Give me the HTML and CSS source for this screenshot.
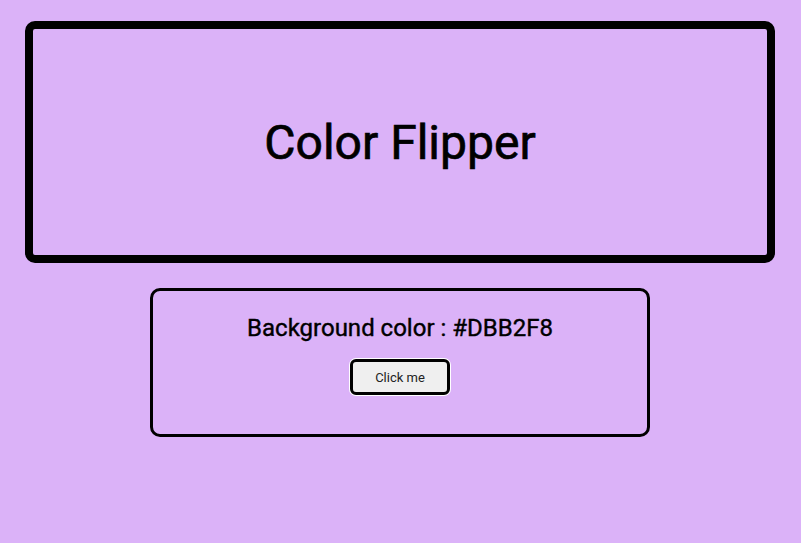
FILE: index.html
```html
<!DOCTYPE html>
<html>
<head>
<meta charset="utf-8">
<title>Color Flipper</title>
<link rel="stylesheet" href="styles.css">
</head>
<body>
<main class="page">
  <header class="hero">
    <h1 class="title">Color Flipper</h1>
  </header>
  <section class="panel">
    <p class="label">Background color : #DBB2F8</p>
    <button class="btn" type="button">Click me</button>
  </section>
</main>
</body>
</html>
```
FILE: styles.css
```css
html, body {
  margin: 0;
  padding: 0;
}
body {
  background: #dbb2f8;
  font-family: Roboto, "Liberation Sans", sans-serif;
  color: #000;
  height: 543px;
  overflow: hidden;
}
.page {
  display: flex;
  flex-direction: column;
  align-items: center;
  padding-top: 21px;
}
.hero {
  box-sizing: border-box;
  width: 750px;
  height: 242px;
  margin-left: -1px;
  border: 8px solid #000;
  border-radius: 10px;
  display: flex;
  align-items: center;
  justify-content: center;
}
.title {
  margin: 0;
  font-size: 48px;
  font-weight: 400;
  line-height: 1;
  margin-top: 2px;
  -webkit-text-stroke: 0.7px #000;
}
.panel {
  box-sizing: border-box;
  width: 500px;
  height: 149px;
  margin-top: 25px;
  margin-left: -1px;
  border: 3px solid #000;
  border-radius: 10px;
  display: flex;
  flex-direction: column;
  align-items: center;
  padding-top: 23px;
}
.label {
  margin: 0;
  font-size: 24px;
  font-weight: 400;
  line-height: 28px;
  -webkit-text-stroke: 0.4px #000;
}
.btn {
  box-sizing: border-box;
  margin-top: 17px;
  width: 100px;
  height: 36px;
  background: #efefef;
  border: 3px solid #000;
  border-radius: 6px;
  box-shadow: 0 0 0 1px #fff;
  font-family: Roboto, "Liberation Sans", sans-serif;
  font-size: 13px;
  color: #222;
  padding: 0;
}
```
